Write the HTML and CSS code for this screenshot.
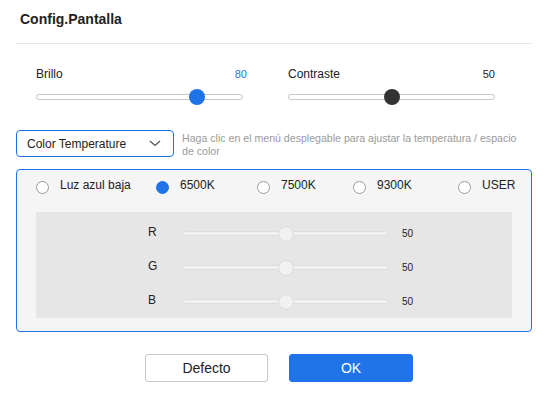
FILE: index.html
```html
<!DOCTYPE html>
<html>
<head>
<meta charset="utf-8">
<link rel="stylesheet" href="styles.css">
</head>
<body>
<div class="dialog">
  <div class="header">Config.Pantalla</div>

  <div class="sliders">
    <div class="slider-group">
      <div class="slider-head">
        <span class="slider-label">Brillo</span>
        <span class="slider-value blue">80</span>
      </div>
      <div class="slider">
        <div class="track"></div>
        <div class="thumb thumb-blue" style="left: calc((100% - 16px) * 0.8)"></div>
      </div>
    </div>
    <div class="slider-group">
      <div class="slider-head">
        <span class="slider-label">Contraste</span>
        <span class="slider-value">50</span>
      </div>
      <div class="slider">
        <div class="track"></div>
        <div class="thumb thumb-dark" style="left: calc((100% - 16px) * 0.5)"></div>
      </div>
    </div>
  </div>

  <div class="select-row">
    <div class="select">
      <span>Color Temperature</span>
      <svg class="chevron" width="12" height="7" viewBox="0 0 12 7"><polyline points="1,1 6,5.5 11,1" fill="none" stroke="#555" stroke-width="1.3"/></svg>
    </div>
    <div class="hint">Haga clic en el menú desplegable para ajustar la temperatura / espacio de color</div>
  </div>

  <div class="panel">
    <div class="radios">
      <div class="radio"><span class="dot"></span><span>Luz azul baja</span></div>
      <div class="radio"><span class="dot checked"></span><span>6500K</span></div>
      <div class="radio"><span class="dot"></span><span>7500K</span></div>
      <div class="radio"><span class="dot"></span><span>9300K</span></div>
      <div class="radio"><span class="dot"></span><span>USER</span></div>
    </div>
    <div class="rgb">
      <div class="rgb-row">
        <span class="rgb-label">R</span>
        <div class="rgb-slider">
          <div class="rgb-track"></div>
          <div class="rgb-thumb" style="left: calc((100% - 16px) * 0.5)"></div>
        </div>
        <span class="rgb-value">50</span>
      </div>
      <div class="rgb-row">
        <span class="rgb-label">G</span>
        <div class="rgb-slider">
          <div class="rgb-track"></div>
          <div class="rgb-thumb" style="left: calc((100% - 16px) * 0.5)"></div>
        </div>
        <span class="rgb-value">50</span>
      </div>
      <div class="rgb-row">
        <span class="rgb-label">B</span>
        <div class="rgb-slider">
          <div class="rgb-track"></div>
          <div class="rgb-thumb" style="left: calc((100% - 16px) * 0.5)"></div>
        </div>
        <span class="rgb-value">50</span>
      </div>
    </div>
  </div>

  <div class="buttons">
    <button class="btn btn-default">Defecto</button>
    <button class="btn btn-primary">OK</button>
  </div>
</div>
</body>
</html>
```

FILE: styles.css
```css
* { box-sizing: border-box; }

html, body {
  margin: 0;
  padding: 0;
  background: #ffffff;
}

body {
  font-family: "Liberation Sans", Arial, sans-serif;
  color: #222222;
}

.dialog {
  width: 548px;
  height: 395px;
  padding: 0 16px;
}

.header {
  height: 44px;
  padding: 11px 4px 0;
  font-size: 14px;
  line-height: 16px;
  font-weight: bold;
  color: #222;
  border-bottom: 1px solid #e6e6e6;
}

.sliders {
  display: flex;
  gap: 45px;
  padding: 23px 0 0 20px;
}

.slider-group {
  width: 207px;
}

.slider-head {
  display: flex;
  justify-content: space-between;
  align-items: baseline;
  height: 14px;
  line-height: 14px;
}

.slider-label {
  font-size: 12px;
  color: #222;
}

.slider-value {
  font-size: 11px;
  color: #222;
}

.slider-value.blue {
  color: #1f73e8;
  margin-right: -4px;
}

.slider {
  position: relative;
  height: 16px;
  margin-top: 8px;
  display: flex;
  align-items: center;
}

.track {
  width: 100%;
  height: 6px;
  border: 1px solid #c8c8c8;
  border-radius: 3px;
  background: #fff;
}

.thumb {
  position: absolute;
  top: 0;
  width: 16px;
  height: 16px;
  border-radius: 50%;
}

.thumb-blue { background: #1f73e8; }
.thumb-dark { background: #333333; }

.select-row {
  display: flex;
  align-items: flex-start;
  gap: 8px;
  margin-top: 25px;
}

.select {
  width: 158px;
  height: 27px;
  border: 1px solid #1f73e8;
  border-radius: 4px;
  display: flex;
  align-items: center;
  justify-content: space-between;
  padding: 0 12px 0 10px;
  font-size: 12px;
  color: #222;
}

.chevron { display: block; }

.hint {
  width: 342px;
  padding-top: 2px;
  font-size: 10.6px;
  line-height: 13px;
  color: #9a9a9a;
}

.panel {
  margin-top: 11px;
  height: 163px;
  border: 1px solid #1f73e8;
  border-radius: 4px;
  background: #f5f5f5;
  padding: 8px 19px 0;
}

.radios {
  display: grid;
  grid-template-columns: 120px 101px 96px 105px auto;
  font-size: 12px;
  line-height: 14px;
}

.radio {
  display: flex;
  align-items: flex-start;
  gap: 11px;
}

.dot {
  width: 13px;
  height: 13px;
  margin-top: 2.5px;
  border-radius: 50%;
  border: 1px solid #9c9c9c;
  background: #fff;
  flex: none;
}

.dot.checked {
  border-color: #1f73e8;
  background: #1f73e8;
}

.rgb {
  margin-top: 18px;
  height: 106px;
  background: #e6e6e6;
  padding: 14px 0 0 112px;
  display: flex;
  flex-direction: column;
  gap: 18px;
}

.rgb-row {
  display: flex;
  align-items: center;
  height: 16px;
}

.rgb-label {
  width: 35px;
  font-size: 12px;
  line-height: 14px;
  padding-bottom: 4px;
  color: #222;
}

.rgb-slider {
  position: relative;
  width: 205px;
  height: 16px;
  display: flex;
  align-items: center;
}

.rgb-track {
  width: 100%;
  height: 5px;
  border-radius: 3px;
  background: #f1f1f1;
  border: 1px solid #dedede;
}

.rgb-thumb {
  position: absolute;
  top: 0;
  width: 16px;
  height: 16px;
  border-radius: 50%;
  background: #f1f1f1;
  border: 1px solid #dcdcdc;
}

.rgb-value {
  margin-left: 14px;
  font-size: 10px;
  color: #222;
}

.buttons {
  display: flex;
  justify-content: center;
  gap: 21px;
  margin-top: 22px;
  padding-left: 10px;
}

.btn {
  height: 28px;
  border-radius: 3px;
  font-family: "Liberation Sans", Arial, sans-serif;
  font-size: 14px;
  padding: 0;
}

.btn-default {
  width: 123px;
  background: #fff;
  border: 1px solid #c8c8c8;
  color: #222;
}

.btn-primary {
  width: 124px;
  background: #2174e8;
  border: 1px solid #2174e8;
  color: #fff;
}
```
